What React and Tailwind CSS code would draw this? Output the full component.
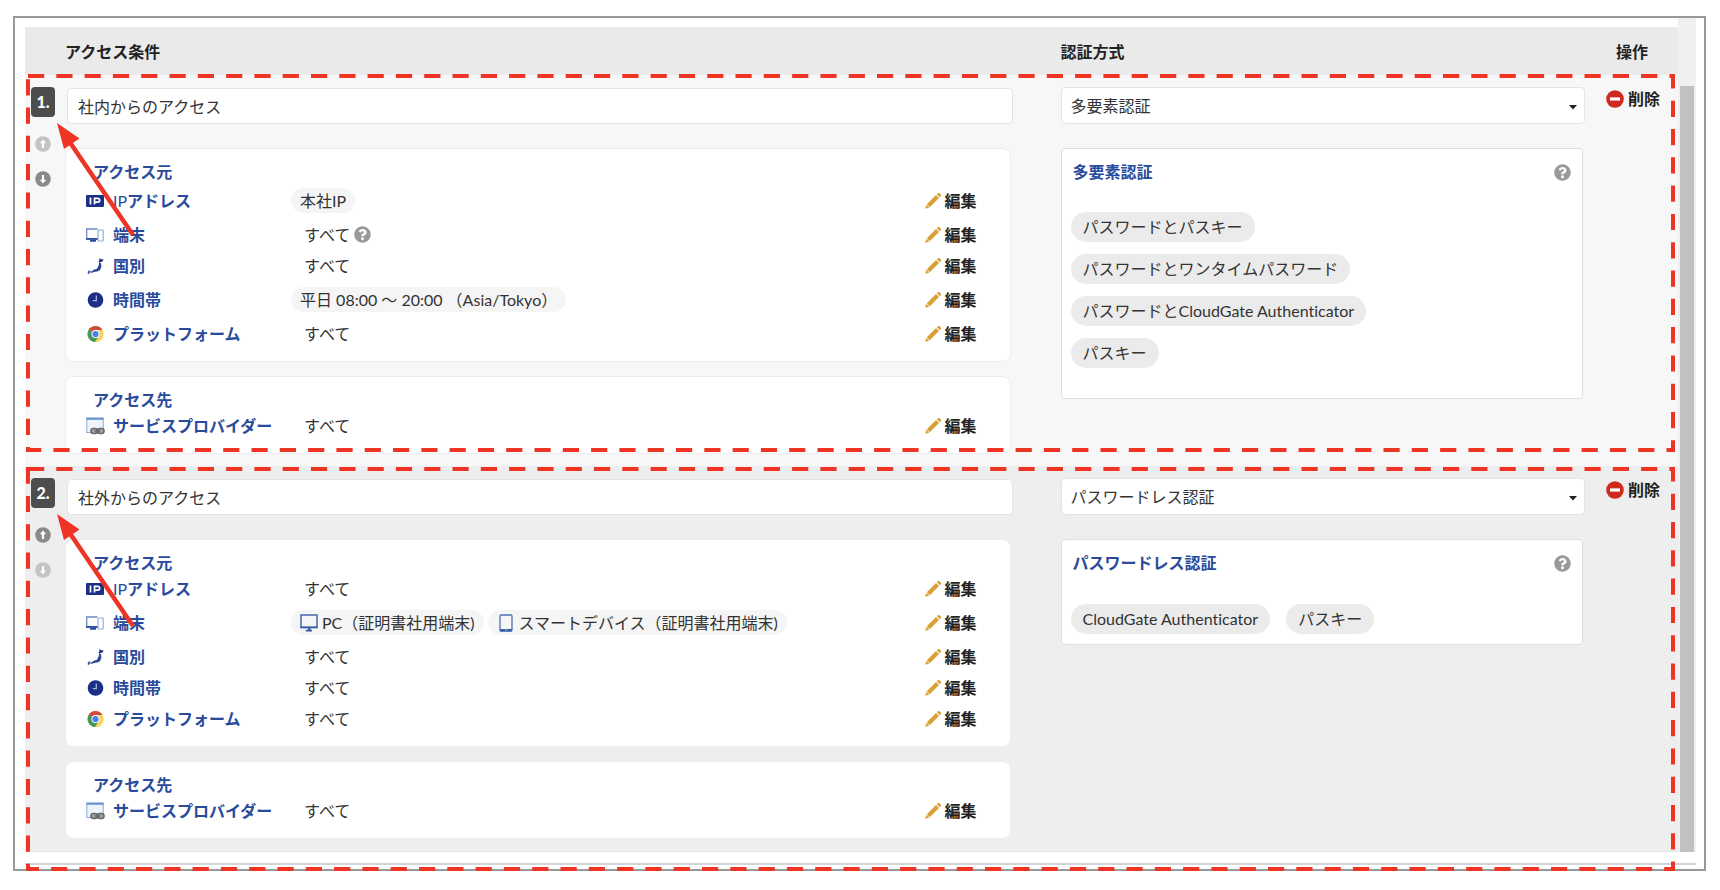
import React, { useState } from 'react';
import { FaQuestionCircle } from 'react-icons/fa';

const rules = [
    {
        id: 1,
        name: '社内からのアクセス',
        auth: '多要素認証',
        methods: ['パスワードとパスキー', 'パスワードとワンタイムパスワード', 'パスワードとCloudGate Authenticator', 'パスキー'],
        stacked: true,
        canMoveUp: false,
        canMoveDown: true,
        conditions: {
            ip: [{ text: '本社IP' }],
            time: [{ text: '平日 08:00 ～ 20:00 （Asia/Tokyo）' }],
        },
        deviceHelp: true,
    },
    {
        id: 2,
        name: '社外からのアクセス',
        auth: 'パスワードレス認証',
        methods: ['CloudGate Authenticator', 'パスキー'],
        stacked: false,
        canMoveUp: true,
        canMoveDown: false,
        conditions: {
            device: [
                { text: 'PC（証明書社用端末)', icon: 'pc' },
                { text: 'スマートデバイス（証明書社用端末)', icon: 'phone' },
            ],
        },
        deviceHelp: false,
    },
];

function IpIcon() {
    return (
        <svg className="h-[18px] w-[18px] shrink-0" viewBox="0 0 18 18" aria-hidden="true">
            <rect x="0" y="3" width="18" height="12" rx="1" fill="#1b2f86" />
            <path d="M4.5 5.5v7M8.5 12.5v-6.2h3.3a1.9 1.9 0 0 1 0 3.8H8.5" fill="none" stroke="#fff" strokeWidth="1.7" />
        </svg>
    );
}

function DeviceIcon() {
    return (
        <svg className="h-[18px] w-[18px] shrink-0" viewBox="0 0 18 18" aria-hidden="true">
            <path d="M11.500 3H.7v10h10.800" fill="#fff" stroke="#6f8bc2" strokeWidth="1.300" />
            <path d="M.2 12h11.500v1.800H.2zM4 14h6v1.800H4z" fill="#2a4b9b" />
            <rect x="12" y="4" width="5.200" height="11" rx=".8" fill="#fff" stroke="#8fb0dd" strokeWidth="1.200" />
        </svg>
    );
}

function CountryIcon() {
    return (
        <svg className="h-[18px] w-[18px] shrink-0" viewBox="0 0 18 18" aria-hidden="true">
            <path d="M13.200 1l2 1.300 2.500.1-1.300 2.200-1.900.3-1.200 1.200-.7-1.600.9-1.500z" fill="#1b2f86" />
            <path d="M13 5.900l2.100.4.300 3.400-1.400 3.500-2.800 1.300-3.300.6-2 .6-.5-1.300 2.800-1.900 2.500-.5 1.400-2.400.7-1.600z" fill="#2f4795" />
            <path d="M2.400 13.600l2.300.2-.7 1.900-1.600 1.600-.8-1 .3-1.500zM4.800 14.400l2-.4-.5 1.500-1.700.4z" fill="#4a5da5" />
        </svg>
    );
}

function ClockIcon() {
    return (
        <svg className="h-[18px] w-[18px] shrink-0" viewBox="0 0 18 18" aria-hidden="true">
            <circle cx="9.5" cy="9" r="7.8" fill="#1b2f86" />
            <path d="M10.3 4.6v5H6.8" fill="none" stroke="#a9b3d9" strokeWidth="1.3" />
        </svg>
    );
}

function ChromeIcon() {
    return (
        <svg className="h-[18px] w-[18px] shrink-0" viewBox="0 0 18 18" aria-hidden="true">
            <circle cx="9.5" cy="9" r="8" fill="#f5d35f" />
            <path d="M9.5 9L2.6 5A8 8 0 0 1 16.4 5z" fill="#cf4b3d" />
            <path d="M9.5 9L2.6 5a8 8 0 0 0 6.4 12l4-6z" fill="#3f9a5b" />
            <path d="M9.5 5h6.9a8 8 0 0 1-6.9 12l3.4-6z" fill="#f5d35f" />
            <circle cx="9.5" cy="9" r="4" fill="#fff" />
            <circle cx="9.5" cy="9" r="3.1" fill="#4a80e8" />
        </svg>
    );
}

function ServiceIcon() {
    return (
        <svg className="h-[18px] w-[18px] shrink-0 overflow-visible" viewBox="0 0 18 18" aria-hidden="true">
            <rect x=".8" y="1" width="16.4" height="14.5" fill="#eef4fc" stroke="#8ca9d6" />
            <path d="M.5 .8h17v2H.5z" fill="#6d93cf" />
            <g fill="#aaa" stroke="#666" strokeWidth="1.6">
                <rect x="5" y="11.5" width="6.5" height="5" rx="2.5" />
                <rect x="11.5" y="11.5" width="6.5" height="5" rx="2.5" />
                <path d="M8.5 14h6" />
            </g>
        </svg>
    );
}

function PencilIcon() {
    return (
        <svg className="h-4 w-4 shrink-0" viewBox="0 0 16 16" fill="#d9a036" aria-hidden="true">
            <path d="M11.800 1.200l.8-.8a1.500 1.500 0 0 1 2.100 0l.9.9a1.500 1.500 0 0 1 0 2.100l-.8.8z" />
            <path d="M11 2l3 3-9.200 9.200-3-3z" />
            <path d="M1.300 11.700l3 3L.2 15.800z" />
        </svg>
    );
}

function PcIcon() {
    return (
        <svg className="h-[18px] w-[18px] shrink-0" viewBox="0 0 18 18" aria-hidden="true">
            <rect x="1" y="1" width="16" height="12.4" fill="none" stroke="#3a5fa9" strokeWidth="1.4" />
            <path d="M.4 12.4h17.2v1.8H.4zM8 14h2.4v2H8zM5.8 15.8H12v1.6H5.8z" fill="#3a5fa9" />
        </svg>
    );
}

function PhoneIcon() {
    return (
        <svg className="h-[18px] w-[18px] shrink-0" viewBox="-2 0 18 18" aria-hidden="true">
            <rect x="1" y="1" width="12" height="16" rx="1" fill="none" stroke="#4f70b4" strokeWidth="1.3" />
            <path d="M1 15h12v2.4H1z" fill="#3a5fa9" />
            <circle cx="7" cy="16.1" r=".7" fill="#fff" />
        </svg>
    );
}

function MoveButton({ label, enabled, down }) {
    return (
        <button type="button" aria-label={label} disabled={!enabled} className={enabled ? 'text-[#8a8a8a]' : 'text-[#c3c3c3]'}>
            <svg className={down ? 'h-4 w-4 rotate-180' : 'h-4 w-4'} viewBox="0 0 16 16" aria-hidden="true">
                <circle cx="8" cy="8" r="7.8" fill="currentColor" />
                <path d="M8 3.4l3.2 3.8H9.1v4.9H6.9V7.2H4.8z" fill="#fff" />
            </svg>
        </button>
    );
}

function Arrow() {
    return (
        <svg className="pointer-events-none absolute top-12 left-8 h-28 w-20 overflow-visible" viewBox="0 0 80 112" aria-hidden="true">
            <path d="M76 112L12 18" stroke="#ee3424" strokeWidth="4.5" />
            <path d="M0 0l22.500 15.500-15.500 10.500z" fill="#ee3424" />
        </svg>
    );
}

// Red dashed frame laid over a whole rule row
function Highlight({ className }) {
    return (
        <div className={className}>
            <svg className="block h-full w-full overflow-visible" aria-hidden="true">
                <rect width="100%" height="100%" fill="none" stroke="#ee3424" strokeWidth="4" strokeDasharray="16.2 12.1" />
            </svg>
        </div>
    );
}

function Condition({ icon, label, values, help }) {
    return (
        <div className={values ? 'flex h-[37px] items-center' : 'flex h-[31px] items-center'}>
            <div className="flex w-[205px] shrink-0 items-center gap-[9px] font-bold text-[#2a4b9b]">
                {icon}
                <span>{label}</span>
            </div>
            <div className="flex flex-1 items-center gap-1">
                {values
                    ? values.map((value, i) => (
                        <span key={i} className="flex h-[25px] items-center gap-1 rounded-full bg-[#f5f5f5] px-[9px]">
                            {value.icon === 'pc' && <PcIcon />}
                            {value.icon === 'phone' && <PhoneIcon />}
                            {value.text}
                        </span>
                    ))
                    : <span className="pl-[13px]">すべて</span>
                }
                {help && (
                    <button type="button" aria-label="ヘルプ" className="text-[#999]">
                        <FaQuestionCircle size={17} />
                    </button>
                )}
            </div>
            <button type="button" className="flex items-center gap-1 font-bold text-[#222]">
                <PencilIcon />
                編集
            </button>
        </div>
    );
}

function Card({ title, children }) {
    return (
        <section className="rounded-lg border border-[#ededed] bg-white py-3 pr-[33px] pl-5">
            <h3 className="mt-px h-5 pl-[7px] leading-5 font-bold text-[#2a4b9b]">{title}</h3>
            {children}
        </section>
    );
}

function RuleRow({ rule }) {
    const [name, setName] = useState(rule.name);
    const [auth, setAuth] = useState(rule.auth);
    const { conditions } = rule;
    const first = rule.id === 1;

    return (
        <tr className={first ? 'relative bg-[#f7f7f7] align-top' : 'relative bg-[#eee] align-top'}>
            <td className="pt-3">
                <div className="flex flex-col items-center gap-[19px] pr-1">
                    <span className="flex h-[30px] w-6 items-center justify-center rounded bg-[#4d4d4d] font-black text-white">{rule.id}.</span>
                    <MoveButton label="上へ移動" enabled={rule.canMoveUp} />
                    <MoveButton label="下へ移動" enabled={rule.canMoveDown} down />
                </div>
            </td>
            <td className="pt-3 pr-12 pb-3">
                <div className="h-[37px] pt-px pl-[2px]">
                    <input
                        type="text"
                        aria-label="アクセス条件名"
                        value={name}
                        onChange={(e) => setName(e.target.value)}
                        className="block h-9 w-full rounded-sm border border-[#e4e4e4] bg-white px-[10px]"
                    />
                </div>
                <div className="mt-6 mr-[2px] flex flex-col gap-[14px]">
                    <Card title="アクセス元">
                        <Condition icon={<IpIcon />} label={<><span className="font-normal">IP</span>アドレス</>} values={conditions.ip} />
                        <Condition icon={<DeviceIcon />} label="端末" values={conditions.device} help={rule.deviceHelp} />
                        <Condition icon={<CountryIcon />} label="国別" />
                        <Condition icon={<ClockIcon />} label="時間帯" values={conditions.time} />
                        <Condition icon={<ChromeIcon />} label="プラットフォーム" />
                    </Card>
                    <Card title="アクセス先">
                        <Condition icon={<ServiceIcon />} label="サービスプロバイダー" />
                    </Card>
                </div>
            </td>
            <td className="pt-3 pr-[21px]">
                <div className="relative">
                    <select
                        aria-label="認証方式"
                        value={auth}
                        onChange={(e) => setAuth(e.target.value)}
                        className="block h-[37px] w-full appearance-none rounded-sm border border-[#e4e4e4] bg-white px-[9px]"
                    >
                        <option>多要素認証</option>
                        <option>パスワードレス認証</option>
                    </select>
                    <svg className="pointer-events-none absolute top-[18px] right-2 h-[5px] w-2" viewBox="0 0 8 5" aria-hidden="true">
                        <path d="M0 0h8L4 4.600z" fill="#222" />
                    </svg>
                </div>
                <section className="mt-6 mr-[2px] rounded-sm border border-[#dedede] bg-white pt-[13px] pr-[11px] pb-[10px] pl-[9px]">
                    <div className="flex h-5 items-center justify-between pl-[2px]">
                        <h3 className="font-bold text-[#2a4b9b]">{rule.auth}</h3>
                        <button type="button" aria-label="ヘルプ" className="text-[#999]">
                            <FaQuestionCircle size={17} />
                        </button>
                    </div>
                    <ul className={rule.stacked ? 'mt-[30px] flex flex-col items-start gap-3 pb-5' : 'mt-[31px] flex flex-wrap gap-4'}>
                        {rule.methods.map((method) => (
                            <li key={method} className="flex h-[30px] items-center rounded-full bg-[#ebebeb] px-3">{method}</li>
                        ))}
                    </ul>
                </section>
            </td>
            <td className="pt-3">
                <button type="button" className="flex items-center gap-1 font-bold text-[#222]">
                    <svg className="h-[18px] w-[18px]" viewBox="0 0 18 18" aria-hidden="true">
                        <circle cx="9" cy="9" r="8.800" fill="#cf2a20" />
                        <rect x="4" y="7.400" width="10" height="3.200" fill="#fff" />
                    </svg>
                    削除
                </button>
                <Arrow />
                <Highlight
                    className={first
                        ? 'pointer-events-none absolute top-px right-[5px] bottom-4 left-[3px]'
                        : 'pointer-events-none absolute top-[3px] right-[5px] -bottom-[18px] left-[3px]'}
                />
            </td>
        </tr>
    );
}

export default function App() {
    return (
        <div className="min-h-screen bg-white pt-4 pr-[14px] pb-4 pl-[13px] font-['Lato','Noto_Sans_CJK_JP',sans-serif] text-base text-[#333] [font-variant-ligatures:none]">
            <main className="border-2 border-[#999] pr-2 pb-1 pl-[10px]">
                <div className="flex">
                    <div className="min-w-0 flex-1 pt-[9px]">
                        <table className="w-full table-fixed border-separate border-spacing-0 border-b border-[#e4e4e4]">
                            <colgroup>
                                <col className="w-10" />
                                <col />
                                <col className="w-[33%]" />
                                <col className="w-[72px]" />
                            </colgroup>
                            <thead>
                                <tr className="h-12 bg-[#eaeaea] text-left text-[#222]">
                                    <td />
                                    <th scope="col" className="pt-px">アクセス条件</th>
                                    <th scope="col" className="pt-px">認証方式</th>
                                    <th scope="col" className="pt-px pl-[10px]">操作</th>
                                </tr>
                            </thead>
                            <tbody>
                                {rules.map((rule) => <RuleRow key={rule.id} rule={rule} />)}
                            </tbody>
                        </table>
                    </div>
                    <div className="flex w-[18px] flex-col bg-[#f0f0f0] px-[2px]" aria-hidden="true">
                        <div className="h-17" />
                        <div className="flex-1 bg-[#c1c1c1]" />
                    </div>
                </div>
                <div className="mt-[11px] h-[2px] bg-[#d0d4da]" />
            </main>
        </div>
    );
}
